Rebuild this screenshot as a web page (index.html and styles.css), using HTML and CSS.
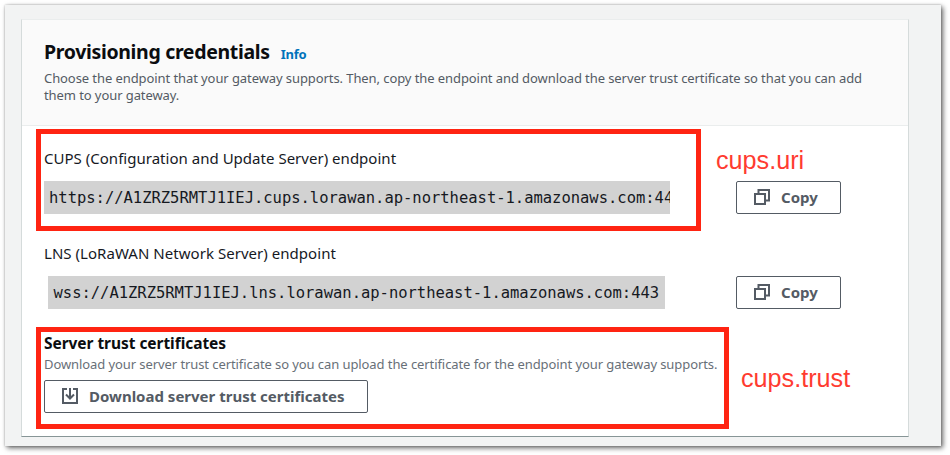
FILE: index.html
```
<!DOCTYPE html>
<html lang="en">
<head>
<meta charset="utf-8">
<title>Provisioning credentials</title>
<link rel="stylesheet" href="styles.css">
</head>
<body>
<main class="window">
  <section class="card">
    <header class="card-header">
      <div class="title-row">
        <h1 class="title">Provisioning credentials</h1>
        <a class="info">Info</a>
      </div>
      <p class="description">Choose the endpoint that your gateway supports. Then, copy the endpoint and download the server trust certificate so that you can add<br>them to your gateway.</p>
    </header>
    <div class="card-body">
      <div class="field">
        <h2 class="label">CUPS (Configuration and Update Server) endpoint</h2>
        <div class="endpoint-row">
          <code class="endpoint endpoint-cups">https://A1ZRZ5RMTJ1IEJ.cups.lorawan.ap-northeast-1.amazonaws.com:44</code>
          <button class="button button-copy">
            <svg class="icon" viewBox="0 0 16 16"><path d="M1 5h10v10H1zM4.5 5V1H15v10.5h-4"/></svg>
            <span>Copy</span>
          </button>
        </div>
      </div>
      <div class="field">
        <h2 class="label label-lns">LNS (LoRaWAN Network Server) endpoint</h2>
        <div class="endpoint-row">
          <code class="endpoint endpoint-lns">wss://A1ZRZ5RMTJ1IEJ.lns.lorawan.ap-northeast-1.amazonaws.com:443</code>
          <button class="button button-copy">
            <svg class="icon" viewBox="0 0 16 16"><path d="M1 5h10v10H1zM4.5 5V1H15v10.5h-4"/></svg>
            <span>Copy</span>
          </button>
        </div>
      </div>
      <div class="certificates">
        <h2 class="subtitle">Server trust certificates</h2>
        <p class="hint">Download your server trust certificate so you can upload the certificate for the endpoint your gateway supports.</p>
        <button class="button button-download">
          <svg class="icon" viewBox="0 0 16 16"><path d="M5 1H1v14h14V1h-4M8 0v10.5M4 6.5l4 4 4-4"/></svg>
          <span>Download server trust certificates</span>
        </button>
      </div>
    </div>
  </section>
</main>
<div class="mark mark-uri"></div>
<div class="mark mark-trust"></div>
<span class="note note-uri">cups.uri</span>
<span class="note note-trust">cups.trust</span>
</body>
</html>
```
FILE: styles.css
```
* { box-sizing: border-box; }
body {
  margin: 0;
  height: 455px;
  padding: 5px 9px 9px 5px;
  overflow: hidden;
  background: #fff;
  color: #16191f;
  font-family: "Noto Sans", sans-serif;
}
h1, h2, p { margin: 0; }
.window {
  height: 441px;
  padding: 14px 32px 9px 16px;
  background: #f2f3f3;
  box-shadow: 0 0 2px rgba(0, 0, 0, .25), 2px 2px 5px rgba(0, 0, 0, .6);
}
.card {
  height: 418px;
  border: 1px solid #d5dbdb;
  border-top-color: #eaeded;
  border-bottom-color: #879596;
  background: #fff;
}
.card-header {
  height: 106px;
  padding: 17px 22px 0;
  background: #fafafa;
  border-bottom: 1px solid #eaeded;
}
.title-row { display: flex; align-items: baseline; gap: 11px; }
.title { color: #0b0d10; font-size: 19.5px; line-height: 30px; letter-spacing: -.34px; }
.info { color: #0073bb; font-size: 13px; font-weight: 700; letter-spacing: -.2px; }
.description {
  margin-top: 3px;
  color: #545b64;
  font-size: 13px;
  line-height: 17px;
  letter-spacing: -.083px;
  white-space: nowrap;
}
.card-body { padding: 21px 22px 0; }
.field { height: 94.5px; }
.label { font-size: 15px; font-weight: 400; line-height: 22px; letter-spacing: .02px; }
.label-lns { letter-spacing: .04px; }
.endpoint-row { display: flex; justify-content: space-between; width: 797px; margin-top: 12px; }
.endpoint {
  height: 33px;
  padding-left: 5px;
  overflow: hidden;
  background: #d2d2d2;
  font: 15.5px/35px "DejaVu Sans Mono", monospace;
  letter-spacing: -.015px;
  white-space: nowrap;
}
.endpoint-cups { width: 626px; }
.endpoint-lns { width: 617px; margin-left: 4px; padding-left: 5.5px; }
.button {
  display: flex;
  align-items: center;
  height: 33px;
  padding: 0 0 1px 17px;
  gap: 11px;
  border: 1px solid #545b64;
  border-radius: 2px;
  background: #fff;
  color: #545b64;
  font: 700 15px/20px "Noto Sans", sans-serif;
}
.button-copy { width: 105px; }
.button-download { width: 324px; margin-top: 7px; }
.icon { width: 16px; height: 16px; fill: none; stroke: currentColor; stroke-width: 2; }
.subtitle { margin-top: -4px; color: #0b0d10; font-size: 15.5px; line-height: 22px; letter-spacing: -.05px; }
.hint {
  margin-top: 1px;
  color: #687078;
  font-size: 13px;
  line-height: 18px;
  letter-spacing: -.083px;
  white-space: nowrap;
}
.mark { position: absolute; left: 36px; border: 5.5px solid #ff2412; }
.mark-uri { top: 129px; width: 665px; height: 102px; }
.mark-trust { top: 327px; width: 693px; height: 102px; }
.note {
  position: absolute;
  color: #ff3b30;
  font: 25.2px/30px "Liberation Sans", sans-serif;
}
.note-uri { left: 716px; top: 145px; }
.note-trust { left: 741px; top: 363px; }
```
